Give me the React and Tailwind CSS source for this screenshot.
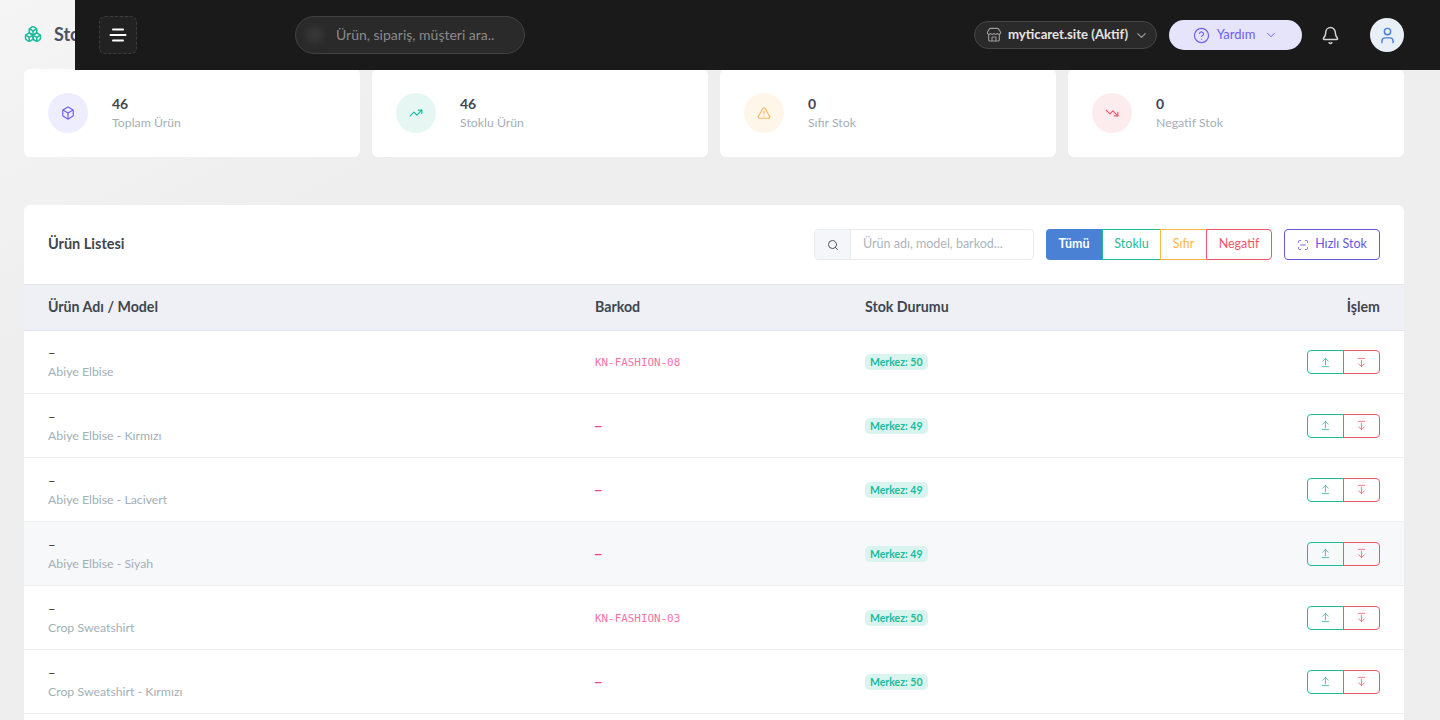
import {
    ArrowDownFromLine,
    ArrowUpFromLine,
    Bell,
    Box,
    Boxes,
    ChevronDown,
    CircleHelp,
    ScanLine,
    Search,
    Store,
    TrendingDown,
    TrendingUp,
    TriangleAlert,
    User,
} from "lucide-react";

const tarjetas = [
    { valor: "46", etiqueta: "Toplam Ürün", Icono: Box, fondo: "bg-[#eeedfd]", color: "text-[#6f5ef0]" },
    { valor: "46", etiqueta: "Stoklu Ürün", Icono: TrendingUp, fondo: "bg-[#e6f7f3]", color: "text-[#1abc9c]" },
    { valor: "0", etiqueta: "Sıfır Stok", Icono: TriangleAlert, fondo: "bg-[#fff6ea]", color: "text-[#fdb75e]" },
    { valor: "0", etiqueta: "Negatif Stok", Icono: TrendingDown, fondo: "bg-[#fdeced]", color: "text-[#f1556c]" },
];

const filas = [
    { nombre: "Abiye Elbise", barkod: "KN-FASHION-08", stok: 50, alto: "h-[63px]" },
    { nombre: "Abiye Elbise - Kırmızı", barkod: "–", stok: 49, alto: "h-16" },
    { nombre: "Abiye Elbise - Lacivert", barkod: "–", stok: 49, alto: "h-16" },
    { nombre: "Abiye Elbise - Siyah", barkod: "–", stok: 49, alto: "h-16", activa: true },
    { nombre: "Crop Sweatshirt", barkod: "KN-FASHION-03", stok: 50, alto: "h-16" },
    { nombre: "Crop Sweatshirt - Kırmızı", barkod: "–", stok: 50, alto: "h-16" },
];

function Encabezado() {
    return (
        <header className="fixed top-0 right-0 left-[75px] z-10 flex h-[70px] items-center bg-[#1a1a1a] pr-9 pl-6">
            <button className="flex h-[38px] w-[38px] items-center justify-center rounded-md border border-dashed border-[#3d3d3d] bg-[#222222]">
                <svg width="18" height="14" viewBox="0 0 18 14" fill="none" stroke="#ffffff" strokeWidth="2" strokeLinecap="round">
                    <path d="M4 1.5h10" />
                    <path d="M1.5 7h15" />
                    <path d="M4 12.5h10" />
                </svg>
            </button>

            <div className="relative ml-[158px] flex h-[38px] w-[230px] items-center rounded-full border border-[#414141] bg-[#2a2a2a] pl-10">
                <span className="absolute top-[9px] left-[10px] h-[18px] w-[18px] rounded-full bg-[#363636] blur-[3px]" />
                <span className="text-sm text-[#8a8a8a]">Ürün, sipariş, müşteri ara..</span>
            </div>

            <div className="ml-auto flex items-center">
                <div className="flex h-[28px] w-[183px] items-center justify-center gap-1.5 rounded-full border border-[#454545] bg-[#2a2a2a] pl-1">
                    <Store size={16} strokeWidth={1.7} className="text-[#9a9a9a]" />
                    <span className="text-[13.2px] font-bold text-[#e4e4e4]">myticaret.site (Aktif)</span>
                    <ChevronDown size={15} className="text-[#9a9a9a]" />
                </div>

                <div className="ml-3 flex h-[30px] w-[133px] items-center justify-center gap-[7px] rounded-full bg-[#e6e4fa] text-[#6f5ef0]">
                    <CircleHelp size={17} strokeWidth={1.7} />
                    <span className="text-[13px]">Yardım</span>
                    <ChevronDown size={14} strokeWidth={1.6} className="ml-0.5" />
                </div>

                <Bell size={19} strokeWidth={1.9} className="ml-[19px] text-[#d0d0d0]" />

                <div className="ml-[30px] flex h-[34px] w-[34px] items-center justify-center rounded-full bg-[#e9eff6]">
                    <User size={19} strokeWidth={1.8} className="text-[#4a81d4]" />
                </div>
            </div>
        </header>
    );
}

function Tarjeta({ valor, etiqueta, Icono, fondo, color }) {
    return (
        <div className="flex h-[88px] items-start rounded-md bg-white pt-6 pl-6">
            <div className={`flex h-10 w-10 items-center justify-center rounded-full ${fondo}`}>
                <Icono size={14} strokeWidth={2} className={color} />
            </div>
            <div className="ml-6">
                <div className="text-sm leading-[22px] font-bold text-[#3f4650]">{valor}</div>
                <div className="text-[12.3px] leading-[16px] text-[#a3afb6]">{etiqueta}</div>
            </div>
        </div>
    );
}

function Fila({ nombre, barkod, stok, alto, activa }) {
    return (
        <div className={`grid ${alto} grid-cols-[547px_270px_1fr_auto] items-center border-b border-[#edeff1] px-6 ${activa ? "bg-[#f7f8fa]" : "bg-white"}`}>
            <div>
                <div className="text-[13px] leading-[20px] text-[#343a40]">–</div>
                <div className="text-[12.3px] leading-[18px] text-[#a3afb6]">{nombre}</div>
            </div>
            <div className={`pt-[3px] font-['DejaVu_Sans_Mono',monospace] text-[10.9px] ${barkod === "–" ? "font-bold text-[#f1448c]" : "text-[#f672a7]"}`}>{barkod}</div>
            <div className="flex">
                <span className="rounded-[5px] bg-[#d9f4ee] px-[5px] text-[10.5px] leading-[16px] font-bold text-[#1abc9c]">
                    Merkez: {stok}
                </span>
            </div>
            <div className="flex h-6 w-[73px]">
                <div className="flex w-[37px] items-center justify-center rounded-l-[4px] border border-[#1abc9c] text-[#1abc9c]">
                    <ArrowUpFromLine size={11} strokeWidth={1.7} />
                </div>
                <div className="flex w-[37px] -ml-px items-center justify-center rounded-r-[4px] border border-[#f1556c] text-[#f1556c]">
                    <ArrowDownFromLine size={11} strokeWidth={1.7} />
                </div>
            </div>
        </div>
    );
}

export default function App() {
    return (
        <div className="h-[720px] overflow-hidden bg-[#eeeeee] bg-linear-to-br from-[#f5f5f5] to-[#eeeeee] to-[25%] font-['Lato',sans-serif]">
            <Encabezado />

            <div className="pr-9 pl-6">
                <div className="flex h-[69px] items-center gap-3 pb-[2px]">
                    <Boxes size={18} strokeWidth={2} className="text-[#1abc9c]" />
                    <h1 className="text-lg font-bold text-[#4a5160]">Stok Yönetimi</h1>
                </div>

                <div className="grid grid-cols-4 gap-3">
                    {tarjetas.map((t) => (
                        <Tarjeta key={t.etiqueta} {...t} />
                    ))}
                </div>

                <div className="mt-12 h-[540px] rounded-md bg-white">
                    <div className="flex h-[79px] items-center px-6">
                        <h2 className="pb-[2px] text-[14.5px] font-bold text-[#3f4650]">Ürün Listesi</h2>

                        <div className="ml-auto flex h-[31px] w-[220px] rounded border border-[#e9ebee]">
                            <div className="flex w-9 items-center justify-center border-r border-[#e9ebee] bg-[#f5f6f9]">
                                <Search size={12} className="text-[#4f565c]" />
                            </div>
                            <div className="flex items-center pl-3 text-[12.5px] text-[#adb5bd]">Ürün adı, model, barkod...</div>
                        </div>

                        <div className="ml-3 flex h-[31px] text-[12.5px]">
                            <div className="flex w-[56px] items-center justify-center rounded-l bg-[#4a81d4] font-bold text-white">Tümü</div>
                            <div className="flex w-[58px] items-center justify-center border border-r-0 border-[#1abc9c] text-[#1abc9c]">Stoklu</div>
                            <div className="flex w-[46px] items-center justify-center border border-r-0 border-[#ffb547] text-[#ffb547]">Sıfır</div>
                            <div className="flex w-[66px] items-center justify-center rounded-r border border-[#f1556c] text-[#f1556c]">Negatif</div>
                        </div>

                        <div className="ml-3 flex h-[31px] w-[96px] items-center justify-center gap-1.5 rounded border border-[#6658dd] text-[12.5px] text-[#6658dd]">
                            <ScanLine size={12} strokeWidth={1.7} />
                            Hızlı Stok
                        </div>
                    </div>

                    <div className="grid h-[47px] grid-cols-[547px_270px_1fr_auto] items-center border-y border-[#e3e5e8] bg-[#eef0f5] px-6 pb-[2px] text-[14.2px] font-bold text-[#3f4650]">
                        <div>Ürün Adı / Model</div>
                        <div>Barkod</div>
                        <div>Stok Durumu</div>
                        <div>İşlem</div>
                    </div>

                    {filas.map((f) => (
                        <Fila key={f.nombre} {...f} />
                    ))}
                </div>
            </div>
        </div>
    );
}
